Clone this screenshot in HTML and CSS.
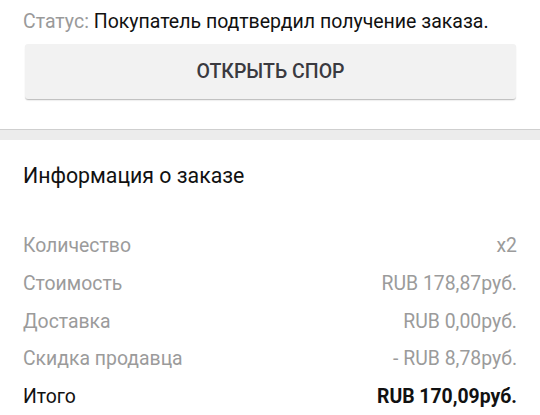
FILE: index.html
```html
<!DOCTYPE html>
<html lang="ru">
<head>
<meta charset="utf-8">
<link rel="stylesheet" href="styles.css">
</head>
<body>
<section class="status-block">
  <p class="status"><span class="status-label">Статус:</span> Покупатель подтвердил получение заказа.</p>
  <button class="dispute-btn" type="button">ОТКРЫТЬ СПОР</button>
</section>
<div class="separator"></div>
<section class="order-info">
  <h2 class="order-title">Информация о заказе</h2>
  <dl class="summary">
    <div class="row"><dt>Количество</dt><dd>x2</dd></div>
    <div class="row"><dt>Стоимость</dt><dd>RUB 178,87руб.</dd></div>
    <div class="row"><dt>Доставка</dt><dd>RUB 0,00руб.</dd></div>
    <div class="row"><dt>Скидка продавца</dt><dd>- RUB 8,78руб.</dd></div>
    <div class="row total"><dt>Итого</dt><dd>RUB 170,09руб.</dd></div>
  </dl>
</section>
</body>
</html>
```

FILE: styles.css
```css
* { box-sizing: border-box; }
html, body {
  margin: 0;
  padding: 0;
  background: #ffffff;
  font-family: Roboto, "Noto Sans", sans-serif;
  color: #111111;
  width: 540px;
  height: 415px;
  overflow: hidden;
}
.status-block {
  padding: 8px 24px 0 23px;
  height: 129px;
}
.status {
  margin: 0;
  font-size: 19.5px;
  line-height: 28px;
  color: #111;
  white-space: nowrap;
}
.status-label { color: #9a9a9a; }
.dispute-btn {
  display: block;
  margin: 8px 0 0 2px;
  width: 491px;
  height: 55px;
  border: none;
  border-radius: 3px;
  background: #f2f2f2;
  box-shadow: 0 1px 1px rgba(0,0,0,0.14), 0 2px 2px -1px rgba(0,0,0,0.18);
  font-family: Roboto, sans-serif;
  font-weight: 500;
  font-size: 19.5px;
  color: #3a3a40;
  padding: 0;
}
.separator {
  height: 11px;
  background: #ececec;
  border-top: 1px solid #cfcfcf;
}
.order-info {
  padding: 22px 23px 0 23px;
}
.order-title {
  margin: 0;
  font-weight: 400;
  font-size: 21.3px;
  line-height: 28px;
  color: #111;
}
.summary {
  margin: 44px 0 0 0;
  display: flex;
  flex-direction: column;
}
.row {
  display: flex;
  justify-content: space-between;
  height: 37.8px;
  line-height: 24px;
  font-size: 19.4px;
  color: #9b9b9b;
}
.row dt, .row dd { margin: 0; }
.total { color: #111; }
.total dd { font-weight: 700; }
```
